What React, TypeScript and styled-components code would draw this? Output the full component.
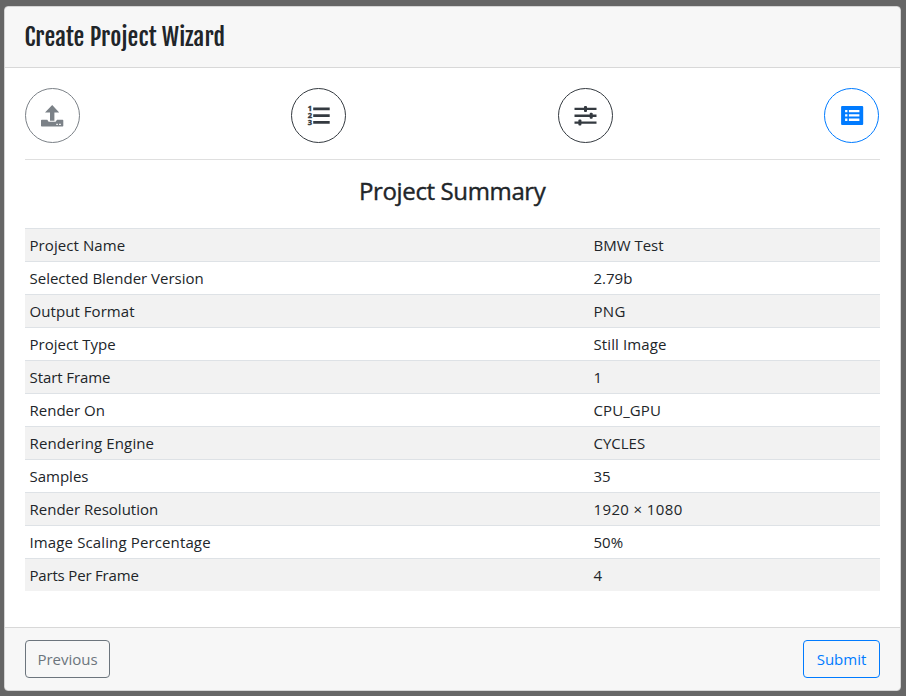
import React from "react";
import styled, { createGlobalStyle } from "styled-components";

const GlobalStyle = createGlobalStyle`
  * { box-sizing: border-box; }
  html, body { margin: 0; height: 100%; }
  body {
    background: #666;
    color: #212529;
    font: 400 16px/24px "Segoe UI", "Open Sans", "Noto Sans", sans-serif;
    overflow: hidden;
  }
`;

const Card = styled.div`
  display: flex;
  flex-direction: column;
  width: 897px;
  height: 685px;
  margin: 6px 0 0 4px;
  background: #fff;
  background-clip: padding-box;
  border: 1px solid #d5d5d5;
  border-radius: 4px;
  overflow: hidden;
`;

const Header = styled.header`
  height: 61px;
  padding: 15px 19.5px 11px;
  background: #f7f7f7;
  border-bottom: 1px solid #d8d8d8;
`;

const Title = styled.h4`
  margin: 0;
  font: 400 24px/30px "Fjalla One", Roboto, sans-serif;
  letter-spacing: 0.14px;
`;

const Body = styled.main`
  flex: 1;
  padding: 20px 20px 0;
`;

const Steps = styled.nav`
  display: flex;
  justify-content: space-between;
  padding: 0 1px 16px 0;
  border-bottom: 1px solid #dfdfdf;
`;

const Step = styled.button<{ $color: string }>`
  display: grid;
  place-items: center;
  width: 55px;
  height: 55px;
  padding: 0;
  color: ${(p) => p.$color};
  background: transparent;
  border: 1px solid currentColor;
  border-radius: 50%;
`;

const Icon = styled.svg`
  display: block;
  width: 25px;
  height: 25px;
  fill: currentColor;
`;

const Numeral = styled.text`
  font: 700 7.5px "Open Sans", sans-serif;
  stroke: currentColor;
  stroke-width: 0.4px;
`;

const Heading = styled.h4`
  margin: 16px 0.5px 22px 0;
  font-size: 24px;
  line-height: 30px;
  font-weight: 400;
  text-align: center;
  letter-spacing: -0.37px;
  -webkit-text-stroke: 0.4px currentColor;
`;

const Table = styled.table`
  width: 100%;
  table-layout: fixed;
  border-collapse: separate;
  border-spacing: 0;
`;

const Row = styled.tr`
  &:nth-child(odd) { background: #f2f2f2; }
`;

const Cell = styled.td<{ $width?: string; $tracking?: number }>`
  width: ${(p) => p.$width ?? "auto"};
  height: 33px;
  padding: 4px 4.5px;
  border-top: 1px solid #dee2e6;
  font-size: 15px;
  line-height: 24px;
  letter-spacing: ${(p) => p.$tracking ?? 0}px;
`;

const Footer = styled.footer`
  display: flex;
  justify-content: space-between;
  padding: 12px 20px;
  background: #f7f7f7;
  border-top: 1px solid #d8d8d8;
`;

const Button = styled.button<{ $color: string; $width: number }>`
  width: ${(p) => p.$width}px;
  height: 38px;
  padding: 0;
  color: ${(p) => p.$color};
  background: transparent;
  border: 1px solid currentColor;
  border-radius: 4px;
  font: inherit;
  font-size: 15px;
`;

const UploadIcon = () => (
  <Icon viewBox="0 0 25 25">
    <path d="M12.2 2 19.2 9.6H14.4V17.7H10V9.6H5Z" />
    <path fillRule="evenodd" d="M1.8 16.8H7.3L8.6 18.8H15.6L17 16.8H22.6Q23.3 16.8 23.3 17.5V22.8Q23.3 23.6 22.6 23.6H1.8Q1 23.6 1 22.8V17.5Q1 16.8 1.8 16.8ZM16.3 20.8V22H17.8V20.8ZM19.1 20.8V22H20.8V20.8Z" />
  </Icon>
);

const NumberedListIcon = () => (
  <Icon viewBox="0 0 25 25">
    <Numeral x="1.8" y="8.3">1</Numeral>
    <Numeral x="1.8" y="15">2</Numeral>
    <Numeral x="1.8" y="21.8">3</Numeral>
    <path d="M7.2 4.6H23.7V7.3H7.2ZM7.2 11.3H23.7V14H7.2ZM7.2 18.1H23.7V20.8H7.2Z" />
  </Icon>
);

const SlidersIcon = () => (
  <Icon viewBox="0 0 25 25">
    <path d="M1.5 4.7H23.5V7.1H1.5ZM1.5 11.5H23.5V13.9H1.5ZM1.5 18.4H23.5V20.8H1.5Z" />
    <rect x="11" y="3" width="3" height="6" rx="1" />
    <rect x="16.7" y="9.7" width="3" height="6" rx="1" />
    <rect x="5.4" y="16.6" width="3" height="6" rx="1" />
  </Icon>
);

const ListPanelIcon = () => (
  <Icon viewBox="-0.6 0 25 25">
    <path fillRule="evenodd" d="M2.5 3H22.5Q23.6 3 23.6 4.1V21Q23.6 22 22.5 22H2.5Q1.5 22 1.5 21V4.1Q1.5 3 2.5 3ZM5.5 7V9.3H7.8V7ZM9.3 7V9.3H19.8V7ZM5.5 11.3V13.6H7.8V11.3ZM9.3 11.3V13.6H19.8V11.3ZM5.5 15.6V17.9H7.8V15.6ZM9.3 15.6V17.9H19.8V15.6Z" />
  </Icon>
);

const steps = [
  { name: "Upload", color: "#7b8187", Glyph: UploadIcon },
  { name: "Frames", color: "#343a40", Glyph: NumberedListIcon },
  { name: "Settings", color: "#343a40", Glyph: SlidersIcon },
  { name: "Summary", color: "#007bff", Glyph: ListPanelIcon },
];

interface Entry {
  label: string;
  value: string;
  labelTracking?: number;
  valueTracking?: number;
}

const summary: Entry[] = [
  { label: "Project Name", value: "BMW Test", labelTracking: 0.08 },
  { label: "Selected Blender Version", value: "2.79b" },
  { label: "Output Format", value: "PNG", labelTracking: 0.06, valueTracking: 0.3 },
  { label: "Project Type", value: "Still Image", valueTracking: 0.1 },
  { label: "Start Frame", value: "1", labelTracking: -0.08 },
  { label: "Render On", value: "CPU_GPU", valueTracking: 0.08 },
  { label: "Rendering Engine", value: "CYCLES", labelTracking: 0.12 },
  { label: "Samples", value: "35" },
  { label: "Render Resolution", value: "1920 × 1080", valueTracking: 0.38 },
  { label: "Image Scaling Percentage", value: "50%", labelTracking: 0.13 },
  { label: "Parts Per Frame", value: "4", labelTracking: -0.18 },
];

export default function App() {
  return (
    <>
      <GlobalStyle />
      <Card>
        <Header>
          <Title>Create Project Wizard</Title>
        </Header>
        <Body>
          <Steps>
            {steps.map(({ name, color, Glyph }) => (
              <Step key={name} $color={color}>
                <Glyph />
              </Step>
            ))}
          </Steps>
          <Heading>Project Summary</Heading>
          <Table>
            <tbody>
              {summary.map(({ label, value, labelTracking, valueTracking }) => (
                <Row key={label}>
                  <Cell $width="564px" $tracking={labelTracking}>{label}</Cell>
                  <Cell $tracking={valueTracking}>{value}</Cell>
                </Row>
              ))}
            </tbody>
          </Table>
        </Body>
        <Footer>
          <Button $color="#6c757d" $width={85}>Previous</Button>
          <Button $color="#007bff" $width={77}>Submit</Button>
        </Footer>
      </Card>
    </>
  );
}
